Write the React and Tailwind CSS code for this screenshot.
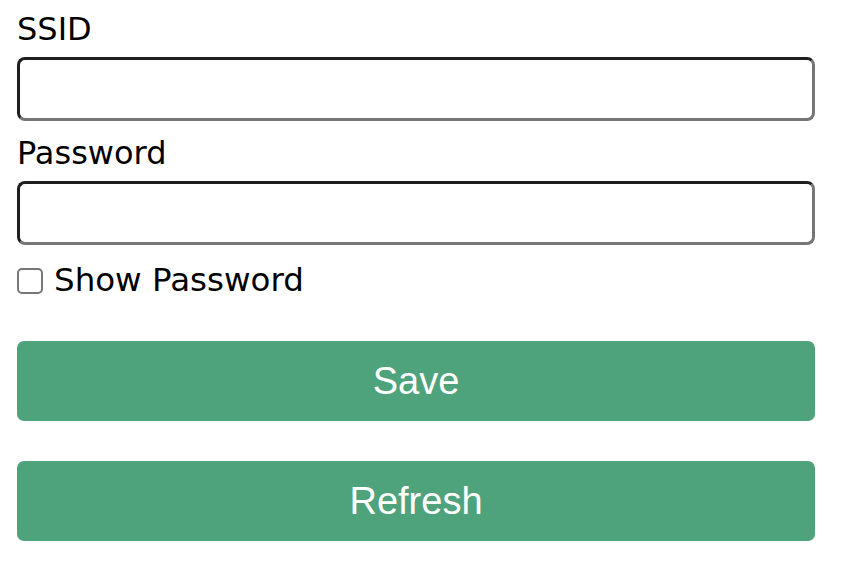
export default function App() {
  return (
    <div className="bg-white min-h-[572px] pl-[17px] pt-[11px] font-['DejaVu_Sans',sans-serif] text-black">
      <div className="w-[798px] flex flex-col">
        <label className="text-[32px] leading-[37px]">SSID</label>
        <input
          type="text"
          className="mt-[9px] h-[64px] w-full rounded-[8px] border-[3px] border-t-[#1f1f1f] border-l-[#1f1f1f] border-r-[#767676] border-b-[#767676] bg-white px-2 text-[28px] outline-none"
        />
        <label className="mt-[14px] text-[32px] leading-[37px]">Password</label>
        <input
          type="password"
          className="mt-[9px] h-[64px] w-full rounded-[8px] border-[3px] border-t-[#1f1f1f] border-l-[#1f1f1f] border-r-[#767676] border-b-[#767676] bg-white px-2 text-[28px] outline-none"
        />
        <label className="mt-[17px] flex items-center gap-[11px] text-[32.5px] leading-[37px]">
          <span className="block h-[26px] w-[26px] rounded-[5px] border-2 border-[#767676] bg-white"></span>
          Show Password
        </label>
        <button className="mt-[42px] h-[80px] w-full rounded-[7px] bg-[#4fa37c] font-['Liberation_Sans',sans-serif] text-[38px] text-white">
          Save
        </button>
        <button className="mt-[40px] h-[80px] w-full rounded-[7px] bg-[#4fa37c] font-['Liberation_Sans',sans-serif] text-[38px] text-white">
          Refresh
        </button>
      </div>
    </div>
  );
}
